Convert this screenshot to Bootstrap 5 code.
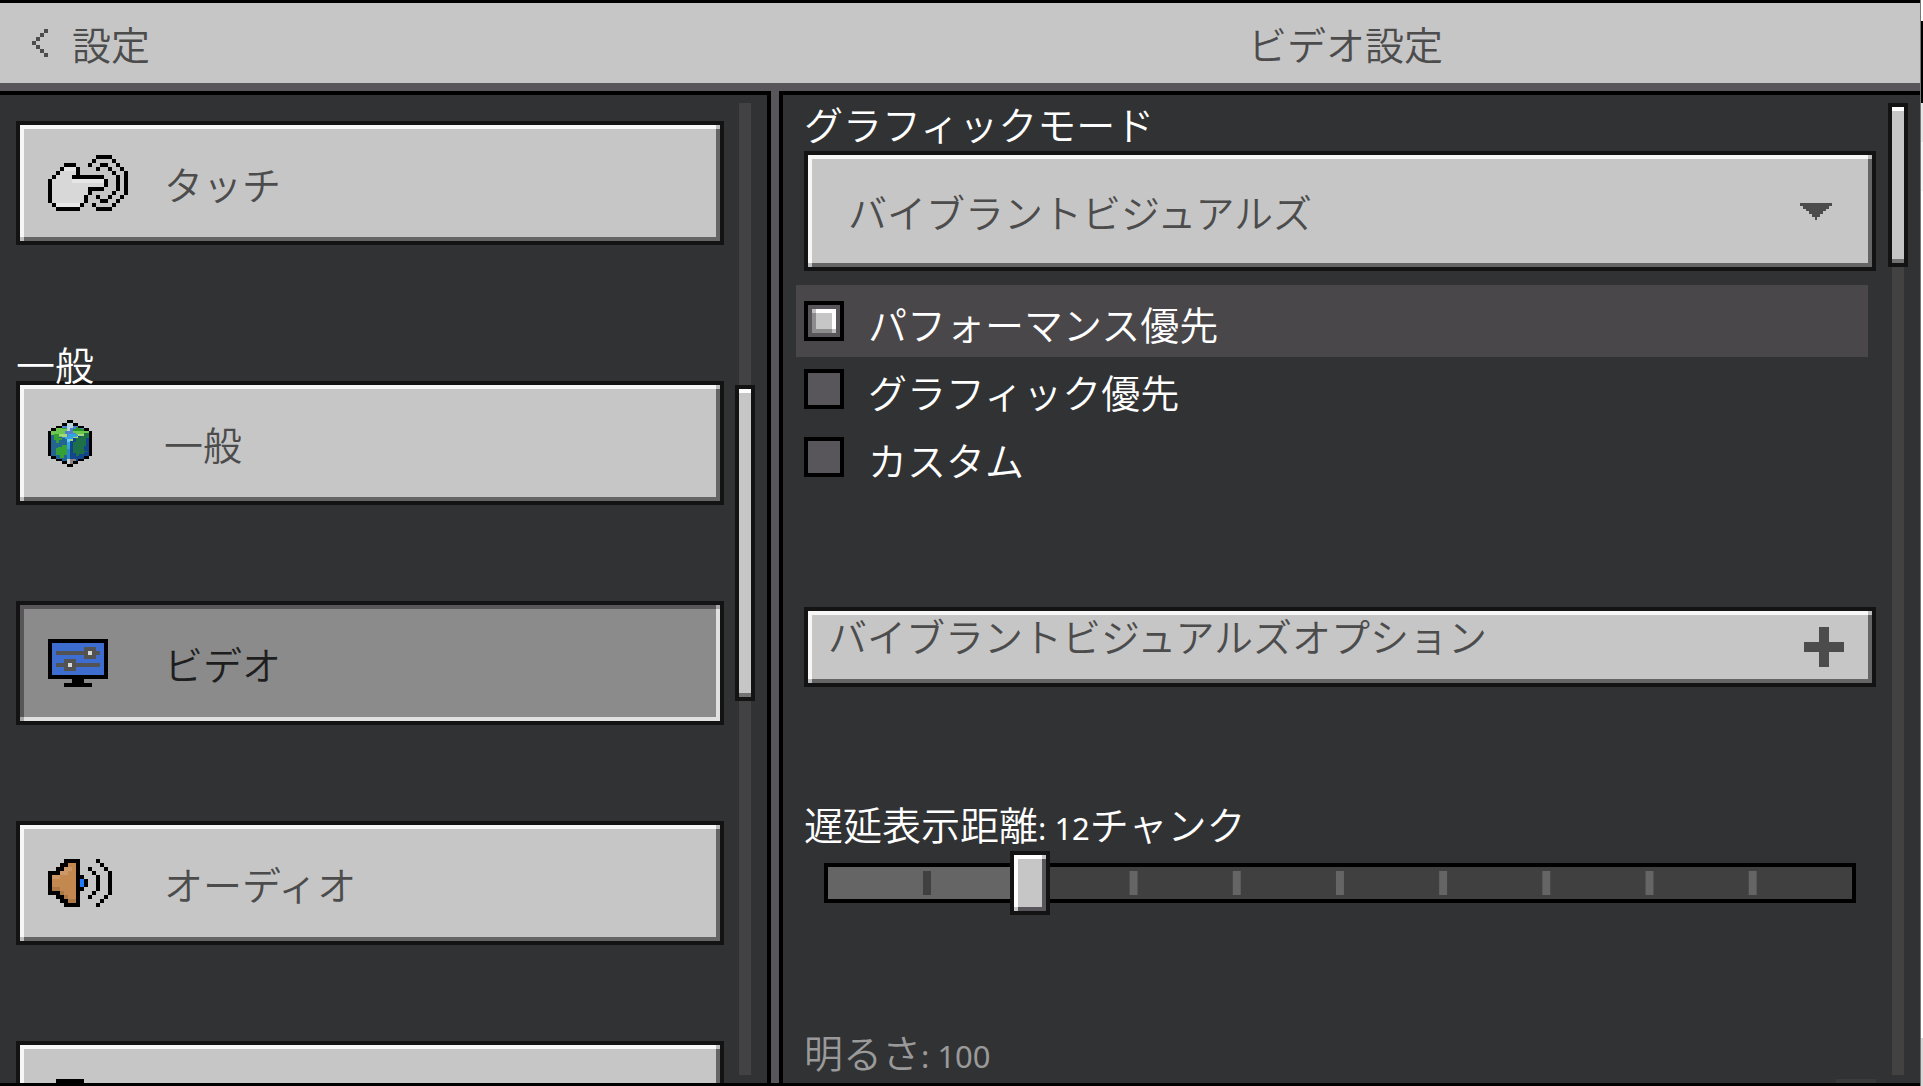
<!DOCTYPE html>
<html lang="ja">
<head>
<meta charset="utf-8">
<meta name="viewport" content="width=device-width, initial-scale=1">
<title>設定</title>
<link href="https://cdn.jsdelivr.net/npm/bootstrap@5.3.0/dist/css/bootstrap.min.css" rel="stylesheet">
<style>
  body {
    font-family: "Noto Sans CJK JP", "Noto Sans", sans-serif;
    font-size: 39px;
    font-weight: 350;
    color: #fff;
    background: #fff;
  }
  .app-frame { border-top: 3px solid #000; border-bottom: 3px solid #000; min-width: 0; }
  .title-bar { height: 80px; background: #c6c6c6; color: #4c4c4c; line-height: 56px; }
  .side-col { flex: 0 0 calc(40% + 3px); }
  .title-side { padding-left: 32px; gap: 24px; }
  .panes { background: #58565a; padding-top: 8px; gap: 8px; min-height: 0; }
  .pane { background: #313234; min-width: 0; overflow: hidden; padding-right: 12px; }
  .pane-side { border-top: 4px solid #000; border-right: 4px solid #000; padding-left: 16px; gap: 11px; }
  .pane-main { border-top: 4px solid #000; border-left: 4px solid #000; padding-left: 21px; gap: 12px; }
  .pane-body { min-width: 0; }
  .neighbour { flex: 0 0 3px; border-left: 1px solid #777;
    background: linear-gradient(#fff 21px, #000 21px 103px, #e6e6e6 103px 142px, #f4f4f4 142px 191px, #fff 191px calc(100% - 48px), #d8d8d8 0); }

  /* raised pixel border: light top-left, dark bottom-right, neutral corners */
  .bevel {
    --hi: #f7f7f7; --lo: #656565; --mid: #c0c0c0; --face: #c6c6c6;
    border: 4px solid #131313;
    border-radius: 0;
    color: #4c4c4c;
    font-weight: 350;
    background:
      linear-gradient(var(--mid), var(--mid)) 100% 0 / 4px 4px no-repeat,
      linear-gradient(var(--mid), var(--mid)) 0 100% / 4px 4px no-repeat,
      linear-gradient(var(--hi), var(--hi)) 0 0 / 100% 4px no-repeat,
      linear-gradient(var(--hi), var(--hi)) 0 0 / 4px 100% no-repeat,
      linear-gradient(var(--lo), var(--lo)) 0 100% / 100% 4px no-repeat,
      linear-gradient(var(--lo), var(--lo)) 100% 0 / 4px 100% no-repeat,
      var(--face);
  }
  .nav-tile { height: 124px; padding: 0 0 0 28px; }
  .nav-tile + .nav-tile { margin-top: 96px; }
  .nav-tile.pressed { --hi: #585658; --lo: #e1e1e1; --mid: #a8a8a8; --face: #8b8b8b; color: #1e1e1e; }
  .tile-icon { flex: 0 0 116px; display: flex; }
  .side-list { padding-top: 26px; }
  .side-heading { margin: 100px 0 0; font-size: 39px; font-weight: 350; line-height: 36px; }
  svg { shape-rendering: crispEdges; display: block; }

  .scroll-rail { flex: 0 0 20px; margin: 8px 0; position: relative;
    background: linear-gradient(#424242, #424242) 50% 0 / 12px 100% no-repeat; }
  .scroll-grip { position: absolute; left: 0; width: 20px; border: 4px solid #131313;
    background: linear-gradient(#fff 4px, #c6c6c6 4px calc(100% - 4px), #727272 0); }
  .grip-side { top: 282px; height: 316px; }
  .grip-main { top: 0; height: 164px; }

  .field-label { display: block; height: 56px; line-height: 56px; }
  .field-label .latin { font-family: "Noto Sans", sans-serif; font-size: 31px; font-weight: 400; line-height: 1; }
  .overlap { display: grid; }
  .overlap > * { grid-area: 1 / 1; }
  .mode-select { appearance: none; width: 100%; height: 120px; padding: 0 96px 0 40px; outline-offset: 2px; }
  .select-arrow { justify-self: end; align-self: center; margin-right: 44px; pointer-events: none; }

  .choices { margin: 14px 8px 114px -8px; }
  .choice { height: 68px; padding: 12px 8px 0; gap: 24px; }
  .choice.chosen { height: 72px; padding-top: 16px; background: #4a474a; }
  .choice label { line-height: 44px; }
  .pixel-radio { appearance: none; flex: 0 0 40px; height: 40px; margin: 0; border: 4px solid #000; background: #58565a; }
  .pixel-radio:checked {
    background:
      linear-gradient(#c0c0c0, #c0c0c0) 4px 4px / 4px 4px no-repeat,
      linear-gradient(#c0c0c0, #c0c0c0) 24px 24px / 4px 4px no-repeat,
      linear-gradient(#fff, #fff) 4px 4px / 24px 4px no-repeat,
      linear-gradient(#fff, #fff) 24px 4px / 4px 24px no-repeat,
      linear-gradient(#8c8c8c, #8c8c8c) 4px 4px / 4px 24px no-repeat,
      linear-gradient(#8c8c8c, #8c8c8c) 4px 24px / 24px 4px no-repeat,
      linear-gradient(#c6c6c6, #c6c6c6) 4px 4px / 24px 24px no-repeat,
      #58565a;
  }
  .expander { height: 80px; padding: 0 28px 0 20px; line-height: 48px; }
  .expander span { align-self: flex-start; }

  .slider-block { margin-top: 108px; }
  .slider-bar { height: 40px; margin: 12px 20px; border: 4px solid #000;
    background:
      linear-gradient(#404040, #404040) calc(10% - 3px) 50% / 8px 24px no-repeat border-box,
      linear-gradient(#656565, #656565) 0 0 / 20% 100% no-repeat border-box,
      linear-gradient(90deg, #656565 4px, transparent 4px calc(100% - 4px), #656565 0) 0 50% / 10% 24px repeat-x border-box,
      #404040; }
  .slider-input { appearance: none; width: 100%; height: 64px; margin: 0; background: none; }
  .slider-input::-webkit-slider-thumb { appearance: none; width: 40px; height: 64px; border: 4px solid #131313;
    background:
      linear-gradient(#c6c6c6, #c6c6c6) 100% 0 / 4px 4px no-repeat,
      linear-gradient(#c6c6c6, #c6c6c6) 0 100% / 4px 4px no-repeat,
      linear-gradient(#fff, #fff) 0 0 / 100% 4px no-repeat,
      linear-gradient(#fff, #fff) 0 0 / 4px 100% no-repeat,
      linear-gradient(#58565a, #58565a) 0 100% / 100% 4px no-repeat,
      linear-gradient(#58565a, #58565a) 100% 0 / 4px 100% no-repeat,
      #c6c6c6; }
  .slider-input:disabled::-webkit-slider-thumb { border-color: #3b3b3c; background: #3b3b3c; }
  .dimmed { color: #9a9a9a; }
</style>
</head>
<body>
<div class="d-flex vh-100 overflow-hidden">
  <div class="app-frame d-flex flex-column flex-grow-1">
    <header class="title-bar d-flex align-items-center flex-shrink-0">
      <div class="side-col title-side d-flex align-items-center">
        <button type="button" class="btn p-0 border-0 rounded-0" aria-label="戻る">
          <svg width="16" height="28" viewBox="0 0 4 7" fill="#4c4c4c"><path d="M3 0h1v1H3zM2 1h1v1H2zM1 2h1v1H1zM0 3h1v1H0zM1 4h1v1H1zM2 5h1v1H2zM3 6h1v1H3z"/></svg>
        </button>
        <span>設定</span>
      </div>
      <div class="flex-grow-1 text-center">ビデオ設定</div>
    </header>

    <div class="panes d-flex flex-grow-1">
      <nav class="pane pane-side side-col d-flex">
        <div class="pane-body side-list flex-grow-1">
          <button type="button" class="bevel nav-tile w-100 d-flex align-items-center text-start">
            <span class="tile-icon">
              <svg width="80" height="56" viewBox="0 0 20 14">
                <path fill="#d8d8d8" d="M4 3h3v3h7v2h-4v2h-1v2h-1v1H2v-1H1V6h1V5h1V4h1z"/>
                <path fill="#e6e6e6" d="M4 3h3v1H4zM6 6h8v1H6zM2 12h6v1H2z"/>
                <path d="M12 0h4v1h-4zM11 1h1v1h-1zM16 1h1v1h-1zM10 2h1v1h-1zM17 2h1v1h-1zM13 2h2v1h-2zM4 2h3v1H4zM3 3h1v1H3zM7 3h1v2H7zM12 3h1v1h-1zM15 3h1v1h-1zM18 3h1v1h-1zM2 4h1v1H2zM16 4h1v1h-1zM19 4h1v6h-1zM1 5h1v1H1zM6 5h8v1H6zM17 5h1v4h-1zM0 6h1v6H0zM14 6h1v2h-1zM10 8h4v1h-4zM10 9h1v1h-1zM16 9h1v1h-1zM9 10h1v2H9zM12 10h1v1h-1zM15 10h1v1h-1zM18 10h1v1h-1zM13 11h2v1h-2zM17 11h1v1h-1zM1 12h1v1H1zM8 12h1v1H8zM11 12h1v1h-1zM16 12h1v1h-1zM2 13h6v1H2zM12 13h4v1h-4z"/>
              </svg>
            </span>
            <span>タッチ</span>
          </button>

          <h2 class="side-heading">一般</h2>

          <button type="button" class="bevel nav-tile w-100 d-flex align-items-center text-start">
            <span class="tile-icon">
              <svg width="44" height="47" viewBox="0 0 132 141">
                <path fill="#4f80d0" d="M57 9h18v9h15v6h18v9h15v21H9V33h15v-9h18v-6h15z"/>
                <path fill="#246490" d="M9 39h15v9h18v6h15v78H42v-9H24v-6H9z"/>
                <path fill="#14468c" d="M66 54h24v-6h18v-9h15v69h-15v9H90v6H75v9h-9z"/>
                <path fill="#6cc850" d="M24 24h33v9H51v9h-9v9H24v-6H9V33h15zM75 30h48v9h-15v6H84v-6h-9z"/>
                <path fill="#35a035" d="M18 42h15v12h9v6H33v9H24v-9h-6zM42 24h15v3H42zM30 81h12v-6h15v30h-9v9H36v-9H24V84h6z"/>
                <path fill="#289428" d="M84 21h15v6h9v6H75v-6h9z"/>
                <path fill="#1d7048" d="M84 51h15v-6h9v-6h15v15h-9v24h-6v15h9v3h-9v6H93v6H84v-9h-9V66h9z"/>
                <path fill="#a4d878" d="M33 42h24v9H42v-3h-9zM90 42h18v6H90v6H75v9h-9v-9h9v-6h15z"/>
                <path fill="#b8d4dc" d="M57 9h18v15h-9v9h-9z"/>
                <path fill="#36a4e4" d="M60 42h27v9H75v6h-9v30h-9V57h-6v-6h9z"/>
                <path fill="#64d0f8" d="M57 57h9v9h-9z"/>
                <path fill="#2c88c0" d="M57 87h9v30h-9z"/>
                <path fill="#d0d0d0" d="M57 117h9v15h-9z"/><path fill="#8a8484" d="M66 117h18v6h-9v9h-9z"/>
                <path d="M57 0h18v9H57zM42 9h15v9H42zM75 9h15v9H75zM24 18h18v6H24zM90 18h18v6H90zM9 24h15v9H9zM108 24h15v9h-15zM0 33h9v75H0zM123 33h9v75h-9zM9 108h15v9H9zM108 108h15v9h-15zM24 117h18v6H24zM90 117h18v6H90zM42 123h15v9H42zM75 123h15v9H75zM57 132h18v9H57z"/>
              </svg>
            </span>
            <span>一般</span>
          </button>

          <button type="button" class="bevel nav-tile pressed w-100 d-flex align-items-center text-start" aria-current="page">
            <span class="tile-icon">
              <svg width="60" height="48" viewBox="0 0 15 12">
                <path d="M0 0h15v10H9v1h2v1H4v-1h2v-1H0z"/>
                <path fill="#3d6dce" d="M1 1h13v8H1z"/>
                <path fill="#535353" d="M2 3h7V2h3v1h1v1h-1v1H9V4H2zM2 6h2V5h3v1h6v1H7v1H4V7H2z"/>
                <path fill="#d8d8d8" d="M10 3h1v1h-1zM5 6h1v1H5z"/>
              </svg>
            </span>
            <span>ビデオ</span>
          </button>

          <button type="button" class="bevel nav-tile w-100 d-flex align-items-center text-start">
            <span class="tile-icon">
              <svg width="64" height="48" viewBox="0 0 16 12">
                <path fill="#c28850" d="M5 1h2v10H5v-1H4V9H3V8H1V4h2V3h1V2h1z"/>
                <path fill="#cd9868" d="M4 2h1v1H4zM3 3h2v1H3zM1 4h2v1H1zM5 2h1v1H5z"/>
                <path fill="#ab7846" d="M1 7h2v1H1zM3 8h1v1H3zM4 9h1v1H4zM5 10h2v1H5z"/>
                <path fill="#1e7cff" d="M8 5h1v2H8z"/>
                <path d="M4 0h4v12H4v-1H3v-1H2V9H0V3h2V2h1V1h1zM4 1v1H4v1H3v1H1v4h2v1h1v1h1v1h2V1H5v1H4V1zM8 4h1v1H8zM9 5h1v2H9zM8 7h1v1H8zM12 0h1v1h-1zM13 1h1v1h-1zM10 2h1v1h-1zM14 2h1v1h-1zM11 3h1v1h-1zM15 3h1v6h-1zM12 4h1v4h-1zM11 8h1v1h-1zM10 9h1v1h-1zM14 9h1v1h-1zM13 10h1v1h-1zM12 11h1v1h-1z" fill-rule="evenodd"/>
              </svg>
            </span>
            <span>オーディオ</span>
          </button>

          <button type="button" class="bevel nav-tile w-100 d-flex align-items-center text-start" aria-label="アカウント">
            <span class="tile-icon">
              <svg width="44" height="48" viewBox="0 0 11 12"><path d="M2 0h7v2H2z"/></svg>
            </span>
          </button>
        </div>
        <div class="scroll-rail"><div class="scroll-grip grip-side"></div></div>
      </nav>

      <main class="pane pane-main flex-grow-1 d-flex">
        <div class="pane-body flex-grow-1">
          <label class="field-label" for="mode">グラフィックモード</label>
          <div class="overlap">
            <select id="mode" class="bevel mode-select">
              <option>バイブラントビジュアルズ</option>
            </select>
            <svg class="select-arrow" width="32" height="17" viewBox="0 0 96 51" fill="#4c4c4c"><path d="M0 0h96v9h-9v9h-9v6h-9v9h-9v9h-9v9h-6v-9h-9v-9h-9v-9h-9v-6H9V9H0z"/></svg>
          </div>

          <div class="choices">
            <div class="choice chosen d-flex">
              <input class="pixel-radio" type="radio" name="priority" id="p1" checked>
              <label for="p1">パフォーマンス優先</label>
            </div>
            <div class="choice d-flex">
              <input class="pixel-radio" type="radio" name="priority" id="p2">
              <label for="p2">グラフィック優先</label>
            </div>
            <div class="choice d-flex">
              <input class="pixel-radio" type="radio" name="priority" id="p3">
              <label for="p3">カスタム</label>
            </div>
          </div>

          <button type="button" class="bevel expander w-100 d-flex align-items-center justify-content-between" aria-expanded="false">
            <span>バイブラントビジュアルズオプション</span>
            <svg width="40" height="40" viewBox="0 0 40 40" fill="#4c4c4c"><path d="M15 0h10v15h15v10H25v15H15V25H0V15h15z"/></svg>
          </button>

          <div class="slider-block">
            <label class="field-label" for="distance">遅延表示距離<span class="latin">: 12</span>チャンク</label>
            <div class="overlap">
              <div class="slider-bar"></div>
              <input class="slider-input" type="range" id="distance" min="5" max="40" value="12">
            </div>
          </div>

          <div class="slider-block dimmed">
            <label class="field-label" for="brightness">明るさ<span class="latin">: 100</span></label>
            <input class="slider-input d-block" type="range" id="brightness" min="0" max="100" value="100" disabled>
          </div>
        </div>
        <div class="scroll-rail"><div class="scroll-grip grip-main"></div></div>
      </main>
    </div>
  </div>
  <div class="neighbour"></div>
</div>
<script src="https://cdn.jsdelivr.net/npm/bootstrap@5.3.0/dist/js/bootstrap.bundle.min.js"></script>
</body>
</html>
